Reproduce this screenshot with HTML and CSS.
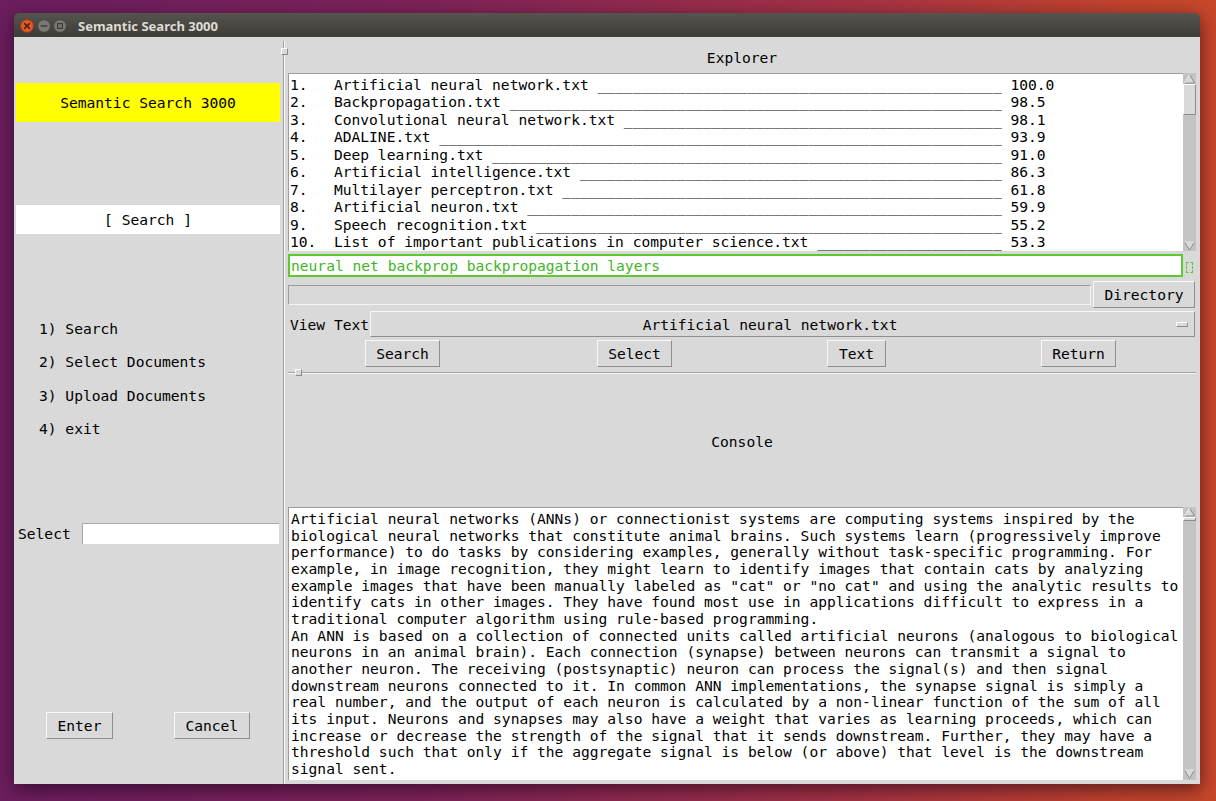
FILE: index.html
```html
<!DOCTYPE html>
<html>
<head>
<meta charset="utf-8">
<title>Semantic Search 3000</title>
<link rel="stylesheet" href="styles.css">
</head>
<body>
<div class="window">
  <div class="titlebar">
    <div class="wbtns">
      <svg class="wbtn" width="14" height="14" viewBox="0 0 14 14"><circle cx="7" cy="7" r="6.3" fill="#e9591f" stroke="#a83b14" stroke-width="0.8"/><path d="M4.6 4.6l4.8 4.8M9.4 4.6l-4.8 4.8" stroke="#3c2a22" stroke-width="1.5" stroke-linecap="round"/></svg>
      <svg class="wbtn" width="14" height="14" viewBox="0 0 14 14"><circle cx="7" cy="7" r="6.3" fill="#7a7973" stroke="#44433f" stroke-width="0.8"/><path d="M4.3 7h5.4" stroke="#3c3b37" stroke-width="1.6" stroke-linecap="round"/></svg>
      <svg class="wbtn" width="14" height="14" viewBox="0 0 14 14"><circle cx="7" cy="7" r="6.3" fill="#7a7973" stroke="#44433f" stroke-width="0.8"/><rect x="4.6" y="4.6" width="4.8" height="4.8" fill="none" stroke="#3c3b37" stroke-width="1.2"/></svg>
    </div>
    <span class="title">Semantic Search 3000</span>
  </div>
  <div class="content">
    <div class="left">
      <div class="banner">Semantic Search 3000</div>
      <div class="searchbar">[ Search ]</div>
      <div class="menu">
        <div class="mitem">1) Search</div>
        <div class="mitem">2) Select Documents</div>
        <div class="mitem">3) Upload Documents</div>
        <div class="mitem">4) exit</div>
      </div>
      <div class="selectrow">
        <span class="sellabel">Select</span>
        <div class="selentry"></div>
      </div>
      <div class="leftbtns">
        <div class="btn">Enter</div>
        <div class="btn">Cancel</div>
      </div>
    </div>
    <div class="vsash"><div class="vline"></div><div class="vhandle"></div></div>
    <div class="right">
      <div class="toppane">
        <div class="plabel plabel-top">Explorer</div>
        <div class="listwrap">
          <div class="list">
            <div class="lrow"><span class="lt">1.   Artificial neural network.txt ______________________________________________</span><span class="sc">100.0</span></div>
            <div class="lrow"><span class="lt">2.   Backpropagation.txt ________________________________________________________</span><span class="sc">98.5</span></div>
            <div class="lrow"><span class="lt">3.   Convolutional neural network.txt ___________________________________________</span><span class="sc">98.1</span></div>
            <div class="lrow"><span class="lt">4.   ADALINE.txt ________________________________________________________________</span><span class="sc">93.9</span></div>
            <div class="lrow"><span class="lt">5.   Deep learning.txt __________________________________________________________</span><span class="sc">91.0</span></div>
            <div class="lrow"><span class="lt">6.   Artificial intelligence.txt ________________________________________________</span><span class="sc">86.3</span></div>
            <div class="lrow"><span class="lt">7.   Multilayer perceptron.txt __________________________________________________</span><span class="sc">61.8</span></div>
            <div class="lrow"><span class="lt">8.   Artificial neuron.txt ______________________________________________________</span><span class="sc">59.9</span></div>
            <div class="lrow"><span class="lt">9.   Speech recognition.txt _____________________________________________________</span><span class="sc">55.2</span></div>
            <div class="lrow"><span class="lt">10.  List of important publications in computer science.txt _____________________</span><span class="sc">53.3</span></div>
          </div>
          <div class="sb">
            <svg class="arr" width="13" height="11" viewBox="0 0 13 11"><polygon points="6.5,1.5 11.5,10 1.5,10" fill="#d9d9d9" stroke="#8c8c8c"/><path d="M1.5 10L6.5 1.5" stroke="#fff"/></svg>
            <div class="thumb thumb-list"></div>
            <div class="trough"></div>
            <svg class="arr" width="13" height="10" viewBox="0 0 13 10"><polygon points="1.5,1 11.5,1 6.5,9" fill="#d9d9d9" stroke="#8c8c8c"/><path d="M1.5 1H11.5" stroke="#fff"/></svg>
          </div>
        </div>
        <div class="queryrow">
          <div class="query">neural net backprop backpropagation layers</div>
          <div class="focusbox"></div>
        </div>
        <div class="row2">
          <div class="direntry"></div>
          <div class="btn">Directory</div>
        </div>
        <div class="row3">
          <span class="vtlabel">View Text</span>
          <div class="optmenu"><span class="opttext">Artificial neural network.txt</span><span class="optind"></span></div>
        </div>
        <div class="row4">
          <div class="btn">Search</div>
          <div class="btn">Select</div>
          <div class="btn">Text</div>
          <div class="btn">Return</div>
        </div>
      </div>
      <div class="hsash"><div class="hline"></div><div class="hhandle"></div></div>
      <div class="botpane">
        <div class="plabel plabel-console">Console</div>
        <div class="consolewrap">
          <div class="console">Artificial neural networks (ANNs) or connectionist systems are computing systems inspired by the
biological neural networks that constitute animal brains. Such systems learn (progressively improve
performance) to do tasks by considering examples, generally without task-specific programming. For
example, in image recognition, they might learn to identify images that contain cats by analyzing
example images that have been manually labeled as "cat" or "no cat" and using the analytic results to
identify cats in other images. They have found most use in applications difficult to express in a
traditional computer algorithm using rule-based programming.
An ANN is based on a collection of connected units called artificial neurons (analogous to biological
neurons in an animal brain). Each connection (synapse) between neurons can transmit a signal to
another neuron. The receiving (postsynaptic) neuron can process the signal(s) and then signal
downstream neurons connected to it. In common ANN implementations, the synapse signal is simply a
real number, and the output of each neuron is calculated by a non-linear function of the sum of all
its input. Neurons and synapses may also have a weight that varies as learning proceeds, which can
increase or decrease the strength of the signal that it sends downstream. Further, they may have a
threshold such that only if the aggregate signal is below (or above) that level is the downstream
signal sent.</div>
          <div class="sb">
            <svg class="arr" width="13" height="10" viewBox="0 0 13 10"><polygon points="6.5,1 11.5,9 1.5,9" fill="#d9d9d9" stroke="#8c8c8c"/><path d="M1.5 9L6.5 1" stroke="#fff"/></svg>
            <div class="thumb thumb-console"></div>
            <div class="trough"></div>
            <svg class="arr" width="13" height="11" viewBox="0 0 13 11"><polygon points="1.5,1 11.5,1 6.5,9.5" fill="#d9d9d9" stroke="#8c8c8c"/><path d="M1.5 1H11.5" stroke="#fff"/></svg>
          </div>
        </div>
      </div>
    </div>
  </div>
</div>
</body>
</html>
```
FILE: styles.css
```css
* { box-sizing: border-box; }

html, body { margin: 0; }

body {
  width: 1216px;
  height: 801px;
  overflow: hidden;
  padding: 13px 0 0 14px;
  background: linear-gradient(90deg, #6c1e5e 0%, #7e2359 35%, #a53244 70%, #c2432d 92%, #c7472a 100%);
  font-family: "DejaVu Sans Mono", "Liberation Mono", monospace;
  font-size: 14.6px;
  color: #000;
}

.window {
  width: 1186px;
  height: 771px;
  display: flex;
  flex-direction: column;
  border-radius: 5px 5px 0 0;
  overflow: hidden;
  box-shadow: 0 5px 18px rgba(20, 0, 20, 0.6);
}

.titlebar {
  height: 24px;
  flex: none;
  display: flex;
  align-items: center;
  padding: 2px 0 0 6px;
  background: linear-gradient(#55544f, #3d3c38);
}

.wbtns { display: flex; gap: 2.7px; }
.wbtn { display: block; }

.title {
  margin-left: 10.6px;
  color: #dfdbd2;
  font-family: "Noto Sans", "DejaVu Sans", sans-serif;
  font-weight: bold;
  font-size: 13px;
}

.content {
  flex: 1;
  display: flex;
  background: #d9d9d9;
}

/* ---------- left pane ---------- */
.left {
  width: 268px;
  flex: none;
  padding: 46px 2px 0;
  display: flex;
  flex-direction: column;
}

.banner {
  height: 39px;
  background: #ffff00;
  display: flex;
  align-items: center;
  justify-content: center;
}

.searchbar {
  margin-top: 83px;
  height: 29px;
  background: #fff;
  display: flex;
  align-items: center;
  justify-content: center;
}

.menu {
  margin-top: 78px;
  padding-left: 23px;
}

.mitem { line-height: 33.33px; }

.selectrow {
  margin-top: 77.7px;
  height: 21px;
  display: flex;
  align-items: center;
}

.sellabel { padding-left: 2px; }

.selentry {
  flex: 1;
  height: 21px;
  margin: 0 1px 0 11px;
  background: #fff;
  border-top: 1px solid #a8a8a8;
  border-left: 1px solid #a8a8a8;
}

.leftbtns {
  margin-top: 168px;
  display: flex;
  gap: 61px;
  padding-left: 30px;
}

/* ---------- buttons ---------- */
.btn {
  display: inline-flex;
  align-items: center;
  justify-content: center;
  height: 27px;
  padding: 0 10.5px;
  background: #d9d9d9;
  border: 1px solid;
  border-color: #f8f8f8 #8e8e8e #8e8e8e #f8f8f8;
  white-space: nowrap;
}

/* ---------- sashes ---------- */
.vsash {
  width: 4px;
  flex: none;
  position: relative;
  padding: 4px 0 0 1px;
}

.vline {
  width: 2px;
  height: 100%;
  border-left: 1px solid #a2a2a2;
  border-right: 1px solid #f6f6f6;
}

.vhandle {
  position: absolute;
  left: -1px;
  top: 11px;
  width: 7px;
  height: 7px;
  background: #d9d9d9;
  border: 1px solid;
  border-color: #fff #8c8c8c #8c8c8c #fff;
}

.hsash {
  position: relative;
  height: 6px;
  margin-top: 3px;
  padding-top: 2px;
}

.hline {
  height: 2px;
  border-top: 1px solid #a2a2a2;
  border-bottom: 1px solid #f6f6f6;
}

.hhandle {
  position: absolute;
  left: 7px;
  top: -1px;
  width: 7px;
  height: 7px;
  background: #d9d9d9;
  border: 1px solid;
  border-color: #fff #8c8c8c #8c8c8c #fff;
}

/* ---------- right pane ---------- */
.right {
  flex: 1;
  padding: 0 4px 0 2px;
  display: flex;
  flex-direction: column;
}

.plabel {
  text-align: center;
  line-height: 18px;
}

.plabel-top { padding-top: 12px; margin-bottom: 6px; }
.plabel-console { padding-top: 57px; }

.listwrap {
  height: 178px;
  display: flex;
}

.list {
  flex: 1;
  background: #fff;
  border-top: 1px solid #9c9c9c;
  border-left: 1px solid #9c9c9c;
  padding: 2px 0 0 1px;
  line-height: 17.45px;
  overflow: hidden;
}

.lrow {
  display: grid;
  grid-template-columns: 82ch auto;
}

.lt { white-space: pre; }
.sc { white-space: pre; }

.sb {
  width: 13px;
  flex: none;
  display: flex;
  flex-direction: column;
  background: #c3c3c3;
}

.arr { display: block; flex: none; }

.thumb {
  flex: none;
  background: #d9d9d9;
  border: 1px solid;
  border-color: #fff #8c8c8c #8c8c8c #fff;
}

.thumb-list { height: 31px; }
.thumb-console { height: 4px; }

.trough { flex: 1; }

.queryrow {
  margin-top: 3px;
  height: 23px;
  display: flex;
}

.query {
  flex: 1;
  background: #fff;
  border: 2px solid #5cc92e;
  color: #3fb526;
  padding-left: 1px;
  line-height: 20px;
  white-space: pre;
}

.focusbox {
  width: 7px;
  height: 11px;
  margin: 8px 3px 0 3px;
  border: 1px dashed #5cc92e;
}

.row2 {
  margin-top: 4px;
  height: 27px;
  display: flex;
  align-items: center;
  padding-right: 1px;
}

.direntry {
  flex: 1;
  height: 20px;
  margin-right: 2px;
  border-top: 1px solid #9c9c9c;
  border-left: 1px solid #9c9c9c;
  border-bottom: 1px solid #f4f4f4;
  border-right: 1px solid #f4f4f4;
}

.row3 {
  margin-top: 3px;
  height: 26px;
  display: flex;
  align-items: center;
  padding-right: 1px;
}

.vtlabel { padding-left: 2px; white-space: pre; }

.optmenu {
  flex: 1;
  height: 26px;
  margin-left: 1px;
  display: flex;
  align-items: center;
  border: 1px solid;
  border-color: #f8f8f8 #8e8e8e #8e8e8e #f8f8f8;
}

.opttext {
  flex: 1;
  text-align: center;
  white-space: pre;
}

.optind {
  width: 12px;
  height: 5px;
  margin: 0 6px 0 7px;
  background: #d9d9d9;
  border: 1px solid;
  border-color: #fff #8c8c8c #8c8c8c #fff;
}

.row4 {
  margin-top: 3px;
  display: grid;
  grid-template-columns: 229fr 235fr 209fr 235fr;
  justify-items: center;
}

.botpane {
  flex: 1;
  display: flex;
  flex-direction: column;
}

.consolewrap {
  margin-top: 56px;
  height: 273px;
  display: flex;
}

.console {
  flex: 1;
  background: #fff;
  border-top: 1px solid #9c9c9c;
  border-left: 1px solid #9c9c9c;
  padding: 3px 0 0 2px;
  line-height: 16.67px;
  white-space: pre;
  overflow: hidden;
}
```
